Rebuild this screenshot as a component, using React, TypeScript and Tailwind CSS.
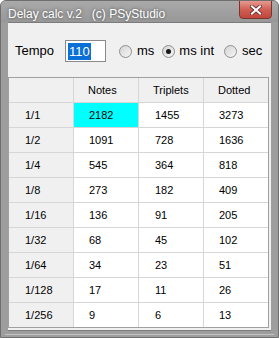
import React from "react";

const rows: [string, string, string, string][] = [
  ["1/1", "2182", "1455", "3273"],
  ["1/2", "1091", "728", "1636"],
  ["1/4", "545", "364", "818"],
  ["1/8", "273", "182", "409"],
  ["1/16", "136", "91", "205"],
  ["1/32", "68", "45", "102"],
  ["1/64", "34", "23", "51"],
  ["1/128", "17", "11", "26"],
  ["1/256", "9", "6", "13"],
];

function Radio({ checked }: { checked?: boolean }) {
  return (
    <div className="w-[13px] h-[13px] rounded-full border border-[#8e8f8f] bg-gradient-to-br from-[#d4d4d4] to-[#f6f6f6] flex items-center justify-center shrink-0">
      {checked && <div className="w-[5px] h-[5px] rounded-full bg-[#1a1a1a]" />}
    </div>
  );
}

export default function App() {
  return (
    <div
      className="w-[279px] h-[338px] bg-[#9d9d9d] border border-[#6e6e6e] rounded-t-[6px] flex flex-col overflow-hidden"
      style={{ fontFamily: '"Liberation Sans", Arial, sans-serif' }}
    >
      {/* Title bar */}
      <div className="h-[21px] flex items-start justify-between bg-gradient-to-b from-[#a9a9a9] to-[#989898]">
        <div className="pl-[7px] pt-[6px] text-[12px] leading-[14px] text-white [text-shadow:0_0_3px_rgba(60,60,60,0.9)] whitespace-pre">
          Delay calc v.2   (c) PSyStudio
        </div>
        <div className="mr-[6px] w-[33px] h-[19px] -mt-px rounded-b-[4px] border border-[#7b3530] bg-gradient-to-b from-[#e59a90] via-[#cf5f55] to-[#c2463b] flex items-center justify-center">
          <svg width="12" height="10" viewBox="0 0 12 10">
            <path d="M2 1.5 L10 8.5 M10 1.5 L2 8.5" stroke="#5a1e1a" strokeWidth="3.6" strokeLinecap="square" />
            <path d="M2 1.5 L10 8.5 M10 1.5 L2 8.5" stroke="#ffffff" strokeWidth="2.2" strokeLinecap="square" />
          </svg>
        </div>
      </div>

      {/* Client area */}
      <div className="mx-[7px] h-[308px] bg-[#f0f0f0] border-t border-[#7c7c7c] flex flex-col">
        <div className="mt-[17px] h-[22px] flex items-center text-[13px] text-black">
          <span className="ml-[7px] w-[50px]">Tempo</span>
          <div className="w-[41px] h-[22px] border border-[#8a8a8a] bg-white flex items-center pl-[2px]">
            <span className="bg-[#0a6fd6] text-white leading-[17px] px-px">110</span>
          </div>
          <div className="ml-[13px] flex items-center">
            <Radio />
            <span className="ml-[5px]">ms</span>
          </div>
          <div className="ml-[8px] flex items-center">
            <Radio checked />
            <span className="ml-[4px]">ms int</span>
          </div>
          <div className="ml-[10px] flex items-center">
            <Radio />
            <span className="ml-[5px]">sec</span>
          </div>
        </div>

        {/* Grid */}
        <div className="mt-[15px] w-[261px] border border-[#a0a0a0] text-[11px] text-black bg-white">
          <div className="flex h-[25px] border-b border-[#d6d6d6] bg-[#f0f0f0]">
            <div className="w-[65px] border-r border-[#d6d6d6]" />
            <div className="w-[65px] border-r border-[#d6d6d6] pl-[14px] flex items-center">Notes</div>
            <div className="w-[65px] border-r border-[#d6d6d6] pl-[14px] flex items-center">Triplets</div>
            <div className="w-[64px] pl-[14px] flex items-center">Dotted</div>
          </div>
          {rows.map((r, i) => (
            <div
              key={r[0]}
              className={`flex ${i === rows.length - 1 ? "h-[24px]" : "h-[25px] border-b border-[#d6d6d6]"}`}
            >
              <div className="w-[65px] border-r border-[#d6d6d6] bg-[#f0f0f0] pl-[16px] flex items-center">{r[0]}</div>
              <div
                className={`w-[65px] border-r border-[#d6d6d6] pl-[15px] flex items-center ${i === 0 ? "bg-[#00ffff]" : ""}`}
              >
                {r[1]}
              </div>
              <div className="w-[65px] border-r border-[#d6d6d6] pl-[16px] flex items-center">{r[2]}</div>
              <div className="w-[64px] pl-[15px] flex items-center">{r[3]}</div>
            </div>
          ))}
        </div>
      </div>

      {/* bottom frame */}
      <div className="mx-[7px] h-px bg-[#7c7c7c]" />
      <div className="mx-[4px] mt-[3px] h-px bg-[#c4c4c4]" />
    </div>
  );
}
